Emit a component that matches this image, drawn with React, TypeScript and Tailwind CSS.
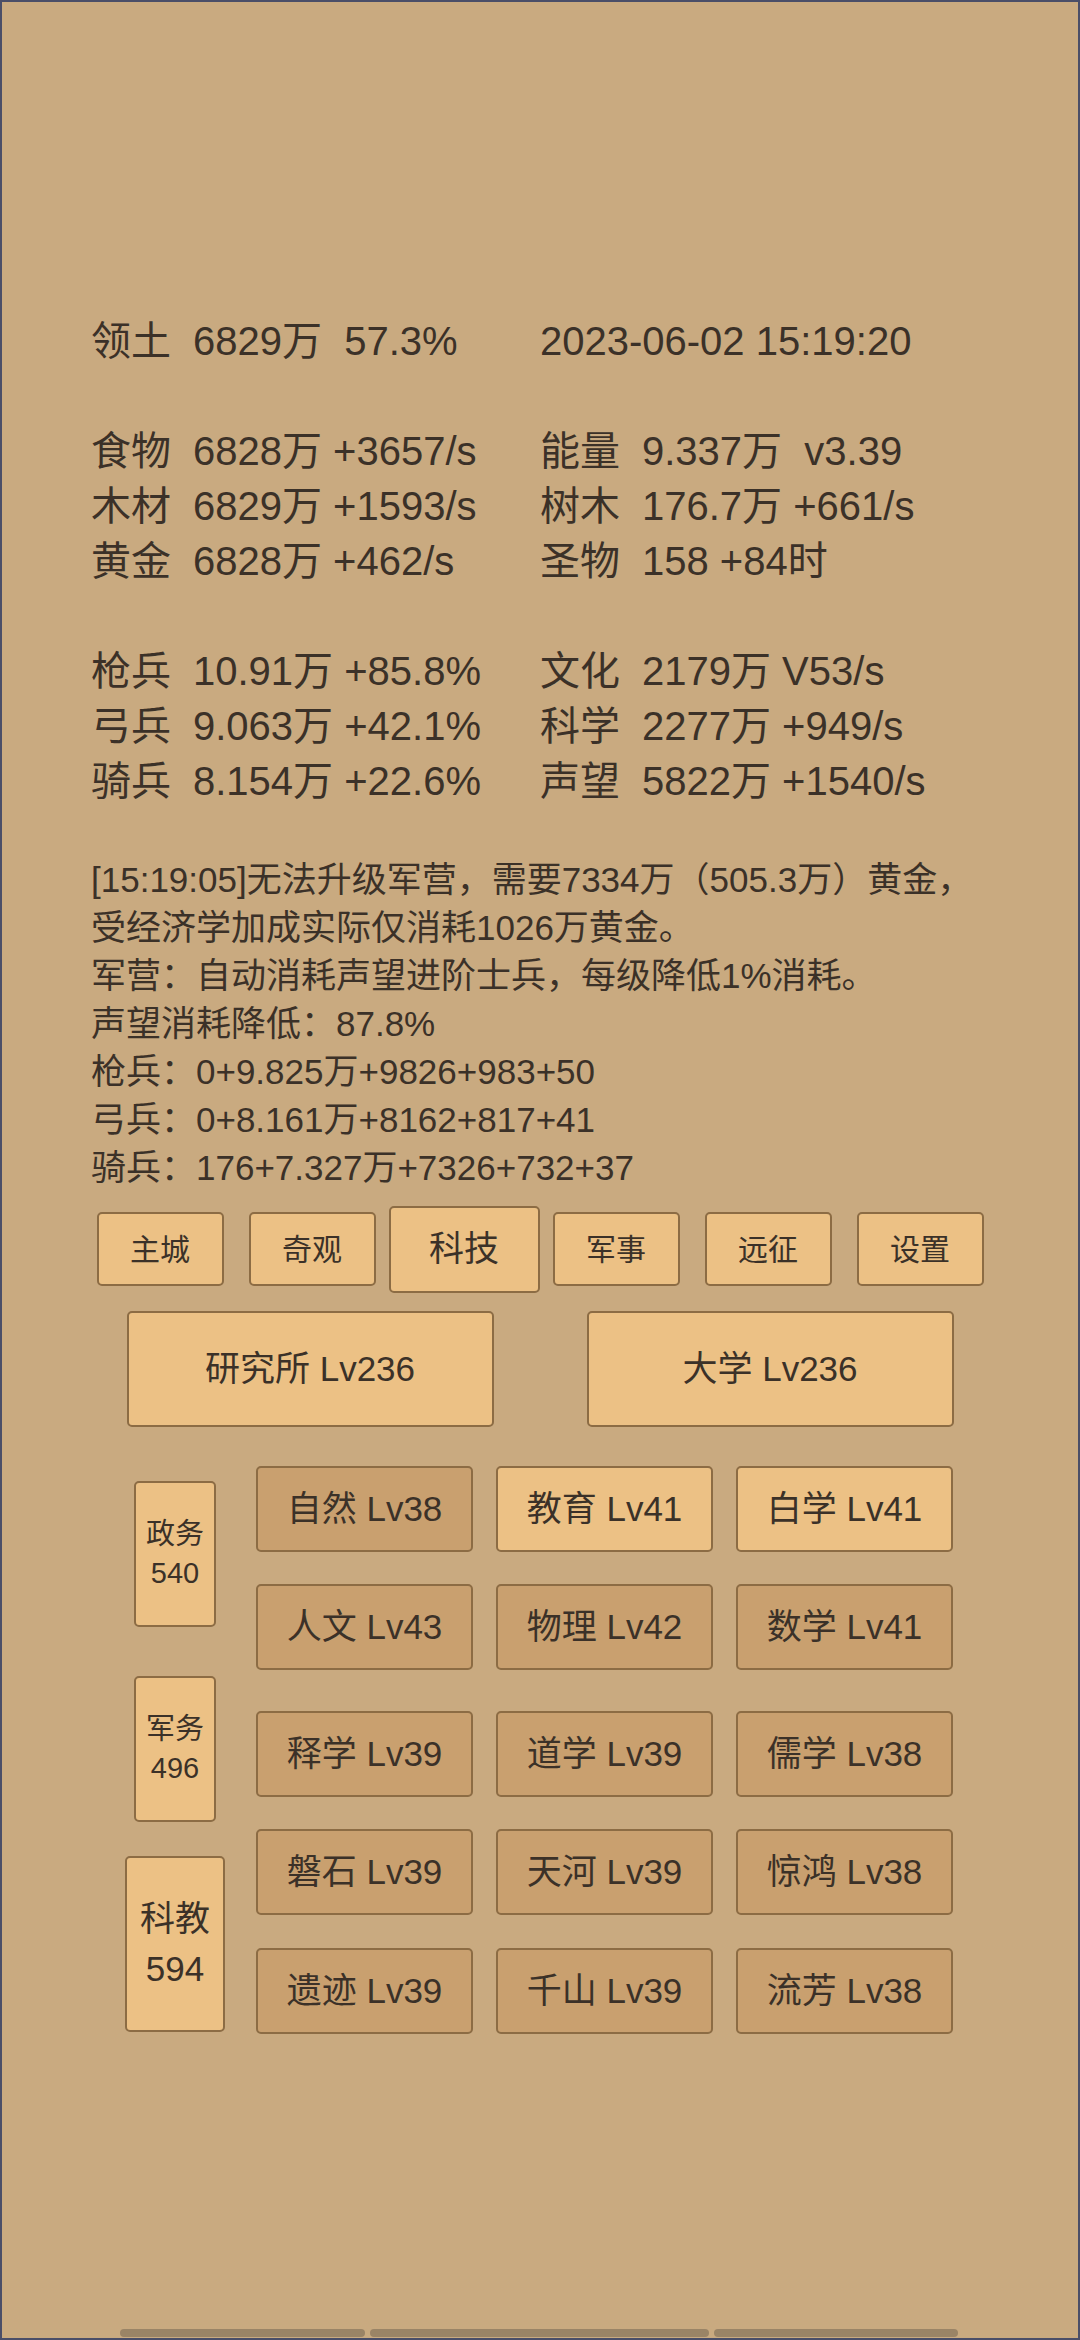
import type { ReactNode } from 'react';

const FONT = "font-['Liberation_Sans','Noto_Sans_CJK_SC',sans-serif]";

type Cell = { label?: string; value: string };

// stats block rows, null = blank line
const statRows: ([Cell, Cell] | null)[] = [
  [{ label: '领土', value: '6829万  57.3%' }, { value: '2023-06-02 15:19:20' }],
  null,
  [{ label: '食物', value: '6828万 +3657/s' }, { label: '能量', value: '9.337万  v3.39' }],
  [{ label: '木材', value: '6829万 +1593/s' }, { label: '树木', value: '176.7万 +661/s' }],
  [{ label: '黄金', value: '6828万 +462/s' }, { label: '圣物', value: '158 +84时' }],
  null,
  [{ label: '枪兵', value: '10.91万 +85.8%' }, { label: '文化', value: '2179万 V53/s' }],
  [{ label: '弓兵', value: '9.063万 +42.1%' }, { label: '科学', value: '2277万 +949/s' }],
  [{ label: '骑兵', value: '8.154万 +22.6%' }, { label: '声望', value: '5822万 +1540/s' }],
];

const logLines = [
  '[15:19:05]无法升级军营，需要7334万（505.3万）黄金，',
  '受经济学加成实际仅消耗1026万黄金。',
  '军营：自动消耗声望进阶士兵，每级降低1%消耗。',
  '声望消耗降低：87.8%',
  '枪兵：0+9.825万+9826+983+50',
  '弓兵：0+8.161万+8162+817+41',
  '骑兵：176+7.327万+7326+732+37',
];

const tabs = ['主城', '奇观', '科技', '军事', '远征', '设置'];
const activeTab = '科技';

type Tech = { name: string; lv: number; light?: boolean };
const techRows: Tech[][] = [
  [{ name: '自然', lv: 38 }, { name: '教育', lv: 41, light: true }, { name: '白学', lv: 41, light: true }],
  [{ name: '人文', lv: 43 }, { name: '物理', lv: 42 }, { name: '数学', lv: 41 }],
  [{ name: '释学', lv: 39 }, { name: '道学', lv: 39 }, { name: '儒学', lv: 38 }],
  [{ name: '磐石', lv: 39 }, { name: '天河', lv: 39 }, { name: '惊鸿', lv: 38 }],
  [{ name: '遗迹', lv: 39 }, { name: '千山', lv: 39 }, { name: '流芳', lv: 38 }],
];
// spacing above each tech row
const rowGap = ['mt-0', 'mt-[32px]', 'mt-[41px]', 'mt-[32px]', 'mt-[33px]'];

const sections = [
  { name: '政务', count: 540 },
  { name: '军务', count: 496 },
  { name: '科教', count: 594, active: true },
];

function StatCell({ cell }: { cell: Cell }) {
  return (
    <div className="whitespace-pre">
      {cell.label && <span>{cell.label}</span>}
      <span className={cell.label ? 'ml-[22px]' : ''}>{cell.value}</span>
    </div>
  );
}

function Btn({ className, children }: { className: string; children: ReactNode }) {
  return (
    <div
      className={`flex shrink-0 items-center justify-center rounded-[5px] border-2 border-[#8c6c44] ${className}`}
    >
      {children}
    </div>
  );
}

export default function App() {
  return (
    <div
      className={`${FONT} flex h-[2340px] w-[1080px] flex-col overflow-hidden border-2 border-[#4a4e68] bg-[#c9aa80] text-[#3b3128]`}
    >
      {/* stats */}
      <div className="pl-[89px] pt-[312px] text-[40px] leading-[55px]">
        {statRows.map((row, i) =>
          row ? (
            <div key={i} className="grid grid-cols-[449px_1fr]">
              <StatCell cell={row[0]} />
              <StatCell cell={row[1]} />
            </div>
          ) : (
            <div key={i} className="h-[55px]" />
          )
        )}
      </div>

      {/* message log */}
      <div className="mt-[47px] pl-[89px] text-[35px] leading-[48px]">
        {logLines.map((l) => (
          <div key={l} className="whitespace-pre">
            {l}
          </div>
        ))}
      </div>

      {/* tab bar */}
      <div className="mt-[20px] flex h-[74px] items-center justify-center gap-[25px]">
        {tabs.map((t) =>
          t === activeTab ? (
            <Btn key={t} className="-mx-[12px] h-[87px] w-[151px] bg-[#ecc185] text-[35px]">
              {t}
            </Btn>
          ) : (
            <Btn key={t} className="h-[74px] w-[127px] bg-[#ecc185] text-[30px]">
              {t}
            </Btn>
          )
        )}
      </div>

      {/* buildings */}
      <div className="mt-[25px] flex justify-center gap-[93px]">
        <Btn className="h-[116px] w-[367px] bg-[#ecc185] text-[35px]">研究所 Lv236</Btn>
        <Btn className="h-[116px] w-[367px] bg-[#ecc185] text-[35px]">大学 Lv236</Btn>
      </div>

      {/* tech tree */}
      <div className="ml-[132px] mt-[39px] flex gap-[40px]">
        <div className="flex w-[82px] flex-col items-center gap-[49px] pt-[15px]">
          {sections.map((s) =>
            s.active ? (
              <Btn
                key={s.name}
                className="-my-[15px] h-[176px] w-[100px] flex-col bg-[#ecc185] text-[35px] leading-[50px]"
              >
                <span>{s.name}</span>
                <span>{s.count}</span>
              </Btn>
            ) : (
              <Btn
                key={s.name}
                className="h-[146px] w-[82px] flex-col bg-[#ecc185] text-[29px] leading-[39px]"
              >
                <span>{s.name}</span>
                <span>{s.count}</span>
              </Btn>
            )
          )}
        </div>
        <div className="flex flex-col">
          {techRows.map((row, i) => (
            <div key={i} className={`grid grid-cols-[217px_217px_217px] gap-[23px] ${rowGap[i]}`}>
              {row.map((t) => (
                <Btn
                  key={t.name}
                  className={`h-[86px] text-[35px] ${t.light ? 'bg-[#ecc185]' : 'bg-[#c9a06f]'}`}
                >
                  {t.name} Lv{t.lv}
                </Btn>
              ))}
            </div>
          ))}
        </div>
      </div>

      {/* bottom scroll bars */}
      <div className="mb-px ml-[118px] mt-auto flex gap-[5px]">
        <div className="h-[8px] w-[245px] rounded-full bg-[#9a8466]" />
        <div className="h-[8px] w-[339px] rounded-full bg-[#9a8466]" />
        <div className="h-[8px] w-[244px] rounded-full bg-[#9a8466]" />
      </div>
    </div>
  );
}
